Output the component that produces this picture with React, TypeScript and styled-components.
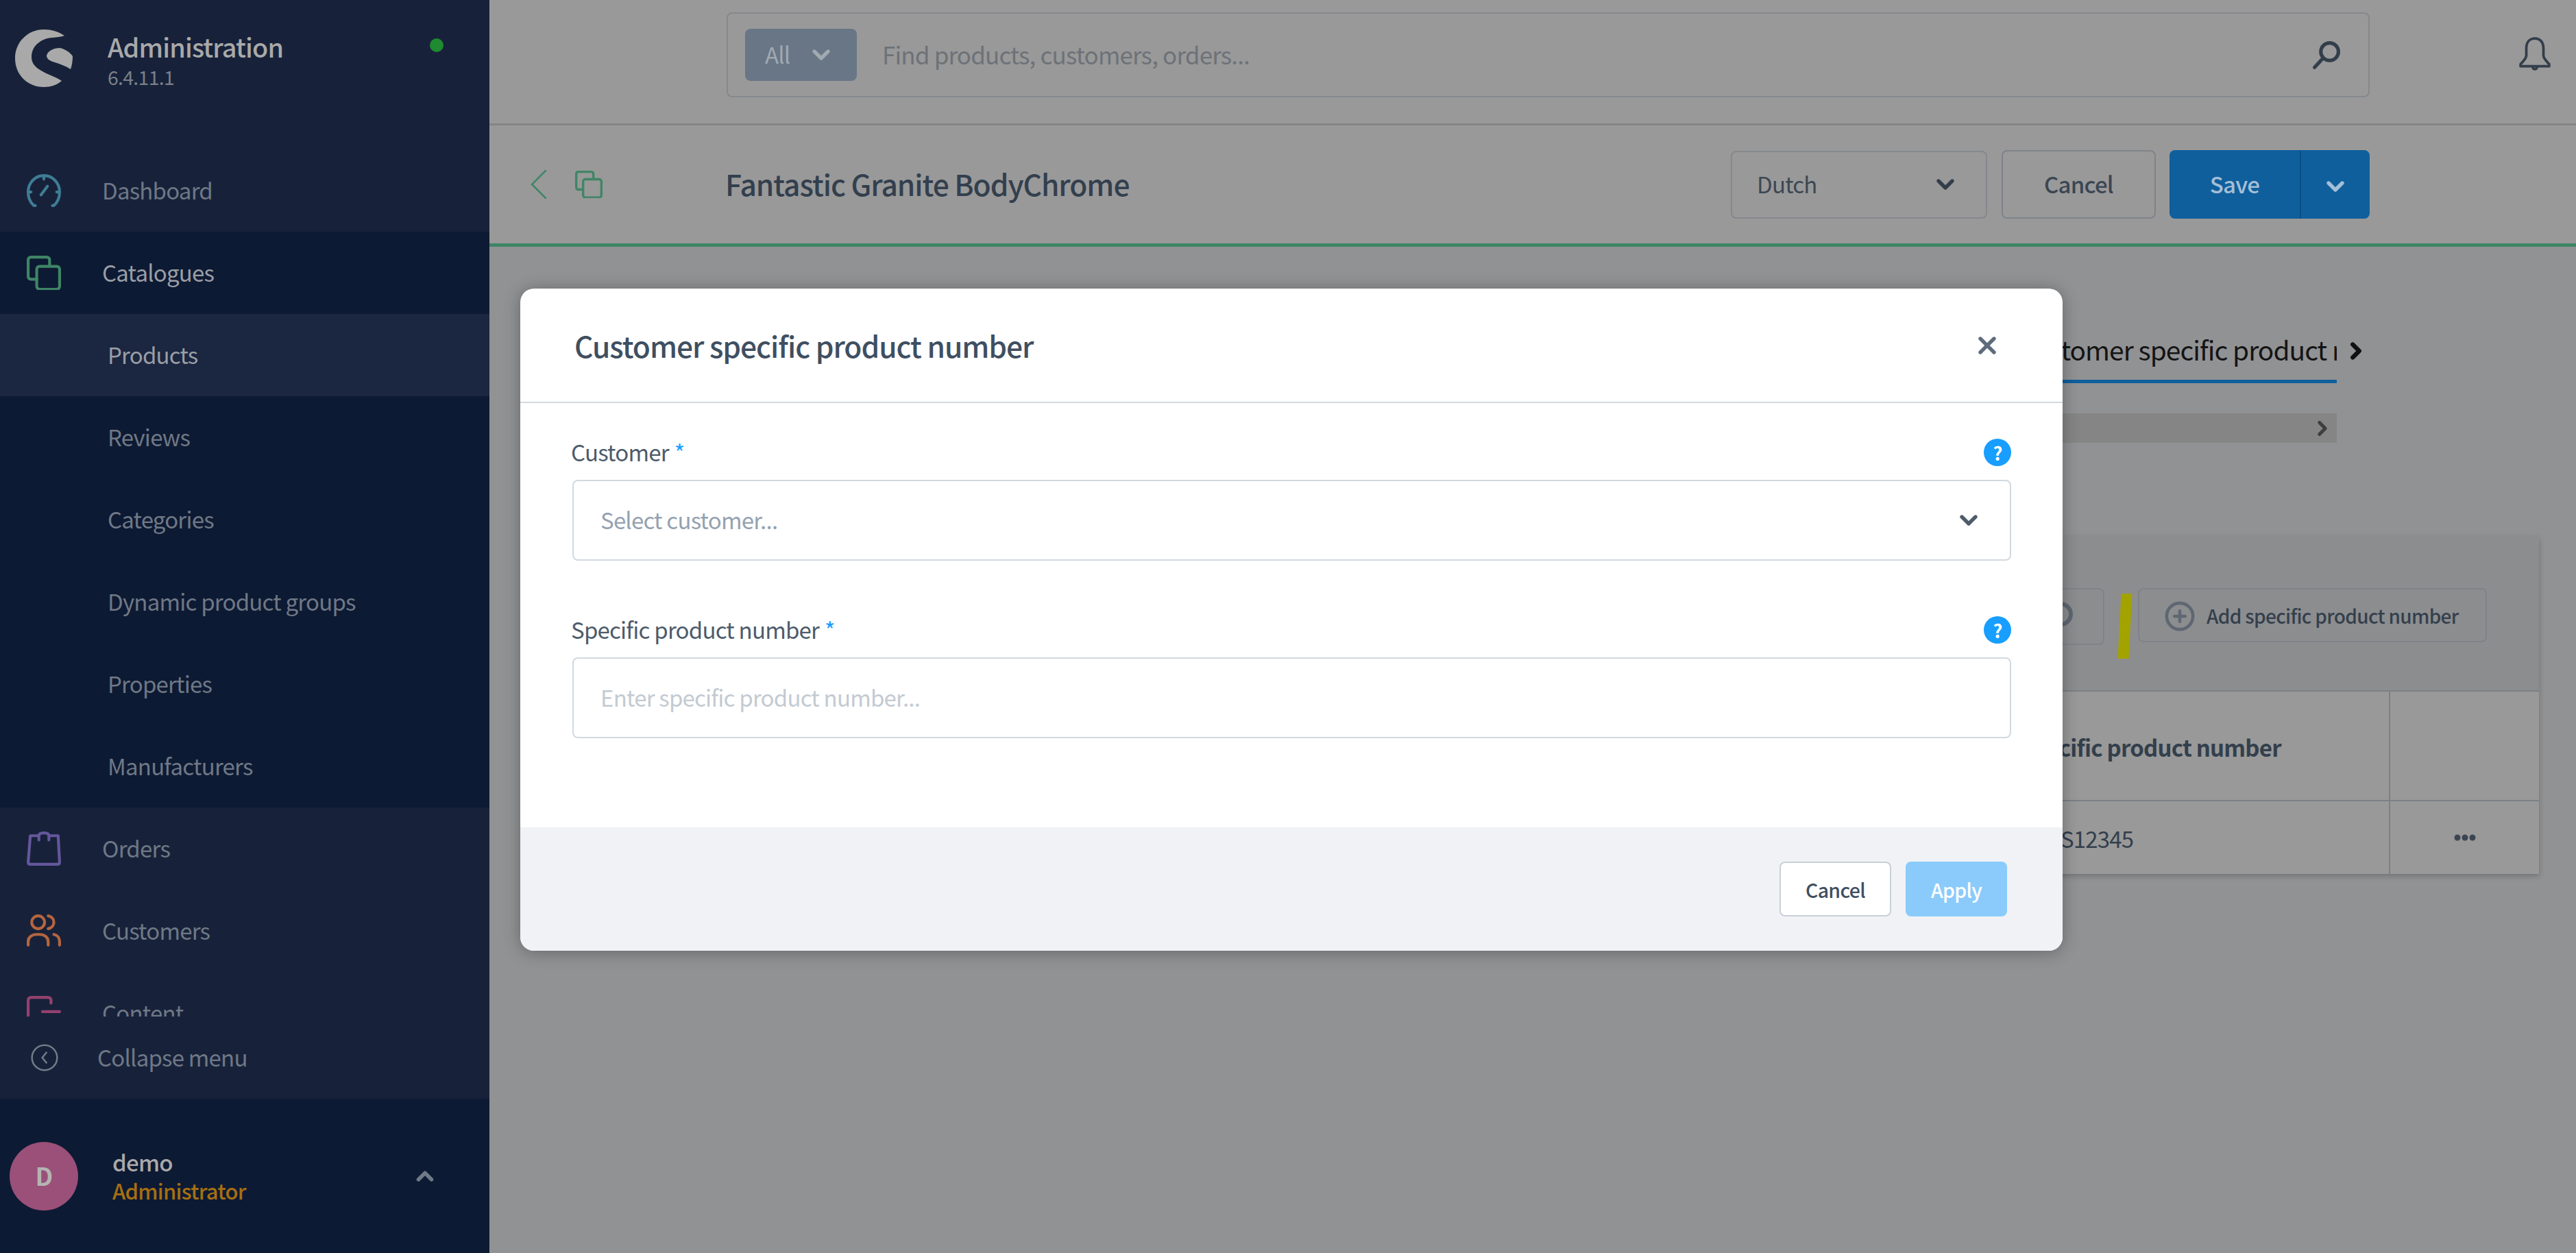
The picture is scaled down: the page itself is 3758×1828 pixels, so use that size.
import React from 'react';
import styled, { createGlobalStyle } from 'styled-components';
import { ChevronDown, ChevronRight, ChevronUp, CirclePlus, X } from 'lucide-react';

const GlobalStyle = createGlobalStyle`
  html, body {
    margin: 0;
    padding: 0;
    background: #919294;
  }
  * {
    box-sizing: border-box;
    letter-spacing: -0.024em;
  }
  body {
    font-family: "Noto Sans CJK SC", "Noto Sans", sans-serif;
  }
`;

const Page = styled.div`
  position: relative;
  display: flex;
  width: 3758px;
  height: 1828px;
  overflow: hidden;
`;

// the CJK font sits a touch low in its line box, this pulls the label back up
const Label = styled.span`
  display: block;
  margin-bottom: 3px;
  white-space: nowrap;
`;

/* sidebar */
const Sidebar = styled.aside`
  width: 714px;
  flex-shrink: 0;
  display: flex;
  flex-direction: column;
  background: #17223a;
`;

const BrandRow = styled.div`
  position: relative;
  height: 218px;
  flex-shrink: 0;
  display: flex;
  padding: 43px 0 0 22px;
`;

const BrandText = styled.div`
  margin-left: 51px;
  display: flex;
  flex-direction: column;
`;

const BrandName = styled.div`
  font-size: 37.800px;
  line-height: 50px;
  font-weight: 500;
  color: #a9a9a9;
`;

const BrandVersion = styled.div`
  margin-top: 1px;
  font-size: 28.400px;
  line-height: 36px;
  color: #7a7f88;
`;

const StatusDot = styled.span`
  position: absolute;
  left: 627px;
  top: 56px;
  width: 20px;
  height: 20px;
  border-radius: 50%;
  background: #1f8a2f;
`;

const NavScroll = styled.nav`
  flex: 1;
  min-height: 0;
  overflow: hidden;
`;

const NavItem = styled.div<{ $active?: boolean }>`
  height: 120px;
  display: flex;
  align-items: center;
  padding-left: 39px;
  gap: 60px;
  font-size: 33px;
  color: ${(p) => (p.$active ? '#9a9ea6' : '#6f7886')};
  background: ${(p) => (p.$active ? '#0d1a33' : 'transparent')};
`;

const NavIcon = styled.svg<{ $color: string }>`
  width: 50px;
  height: 50px;
  flex-shrink: 0;
  fill: none;
  stroke: ${(p) => p.$color};
  stroke-width: 2;
  stroke-linecap: round;
  stroke-linejoin: round;
`;

const SubMenu = styled.div`
  background: #0d1a33;
`;

const SubItem = styled.div<{ $active?: boolean }>`
  height: 120px;
  display: flex;
  align-items: center;
  padding-left: 157px;
  font-size: 33px;
  color: ${(p) => (p.$active ? '#9a9ea6' : '#6f7886')};
  background: ${(p) => (p.$active ? '#1b2640' : 'transparent')};
`;

const CollapseRow = styled.div`
  height: 120px;
  flex-shrink: 0;
  display: flex;
  align-items: center;
  padding-left: 45px;
  gap: 57px;
  font-size: 33px;
  color: #6f7886;
`;

const UserRow = styled.div`
  height: 225px;
  flex-shrink: 0;
  display: flex;
  align-items: center;
  padding: 0 0 0 14px;
  background: #0d1a33;
`;

const Avatar = styled.div`
  width: 100px;
  height: 100px;
  border-radius: 50%;
  background: #9a5078;
  color: #b4b4b4;
  display: flex;
  align-items: center;
  justify-content: center;
  font-size: 36px;
  font-weight: 700;
`;

const UserText = styled.div`
  margin-left: 50px;
  width: 437px;
`;

const UserName = styled.div`
  font-size: 33px;
  line-height: 42px;
  font-weight: 500;
  color: #a9a9a9;
`;

const UserRole = styled.div`
  font-size: 31px;
  line-height: 42px;
  font-weight: 500;
  color: #a66f12;
`;

/* main column */
const Main = styled.main`
  flex: 1;
  min-width: 0;
  display: flex;
  flex-direction: column;
`;

const TopBar = styled.header`
  height: 183px;
  flex-shrink: 0;
  display: flex;
  padding: 18px 0 0 346px;
  background: #999999;
  border-bottom: 3px solid #858585;
`;

const SearchBox = styled.div`
  width: 2397px;
  height: 124px;
  display: flex;
  align-items: center;
  padding: 0 39px 0 25px;
  border: 2px solid #85888c;
  border-radius: 8px;
`;

const TypePill = styled.div`
  width: 163px;
  height: 76px;
  display: flex;
  align-items: center;
  gap: 26px;
  padding-left: 29px;
  border-radius: 8px;
  background: #687686;
  color: #a1a9b1;
  font-size: 33px;
`;

const SearchHint = styled.div`
  margin-left: 37px;
  flex: 1;
  font-size: 35px;
  color: #6d7278;
`;

const BellWrap = styled.div`
  margin: 36px 0 0 216px;
`;

const SmartBar = styled.div`
  height: 177px;
  flex-shrink: 0;
  display: flex;
  align-items: center;
  padding: 0 301px 0 60px;
  background: #999999;
  border-bottom: 5px solid #3f8566;
`;

const BackGroup = styled.div`
  width: 284px;
  display: flex;
  align-items: center;
  gap: 41px;
`;

const PageTitle = styled.h1`
  flex: 1;
  margin: 0 0 3px;
  font-size: 42.500px;
  font-weight: 500;
  color: #333f4e;
`;

const Actions = styled.div`
  display: flex;
  align-items: center;
`;

const LangSelect = styled.div`
  width: 374px;
  height: 99px;
  display: flex;
  align-items: center;
  justify-content: space-between;
  padding: 0 39px 0 36px;
  border: 2px solid #85888c;
  border-radius: 8px;
  font-size: 33px;
  color: #3d4753;
`;

const GhostButton = styled.div`
  width: 225px;
  height: 100px;
  margin-left: 21px;
  display: flex;
  align-items: center;
  justify-content: center;
  border: 2px solid #7f8388;
  border-radius: 8px;
  font-size: 33px;
  font-weight: 500;
  color: #3b4653;
`;

const SaveButton = styled.div`
  width: 292px;
  height: 100px;
  margin-left: 20px;
  display: flex;
  border-radius: 8px;
  background: #0f5f9d;
  color: #a4bfd6;
  font-size: 33px;
  font-weight: 500;
`;

const SaveLabel = styled.div`
  width: 192px;
  display: flex;
  align-items: center;
  justify-content: center;
  border-right: 2px solid #0c4f84;
`;

const SaveCaret = styled.div`
  flex: 1;
  display: flex;
  align-items: center;
  justify-content: center;
  padding-top: 6px;
`;

/* page content behind the modal */
const Content = styled.div`
  flex: 1;
  min-height: 0;
  padding-top: 105px;
  background: #919294;
`;

const TabsRow = styled.div`
  display: flex;
  align-items: center;
  padding: 0 301px 0 346px;
`;

const TabsClip = styled.div`
  flex: 1;
  min-width: 0;
  overflow: hidden;
`;

const Tab = styled.div`
  display: inline-block;
  margin-left: 1884px;
  height: 94px;
  line-height: 88px;
  white-space: nowrap;
  font-size: 38.800px;
  color: #141414;
  border-bottom: 5px solid #0f5f9d;
`;

const TabsArrow = styled.div`
  width: 48px;
  display: flex;
  justify-content: center;
  padding-left: 8px;
  color: #111111;
`;

const ScrollTrack = styled.div`
  height: 43px;
  margin: 44px 349px 0 346px;
  display: flex;
  align-items: center;
  justify-content: flex-end;
  padding-right: 4px;
  background: #858585;
  color: #3e3e3e;
`;

const Card = styled.section`
  margin: 137px 54px 0 60px;
  background: #999999;
  box-shadow: 0 3px 8px rgba(0, 0, 0, 0.22);
`;

const CardToolbar = styled.div`
  height: 226px;
  display: flex;
  justify-content: flex-end;
  align-items: flex-start;
  padding: 75px 76px 0 0;
  background: #8c8d8f;
  border-bottom: 2px solid #7c8086;
`;

const RefreshButton = styled.div`
  width: 240px;
  height: 83px;
  display: flex;
  align-items: center;
  justify-content: flex-end;
  padding-right: 44px;
  border: 2px solid #7f8388;
  border-radius: 8px;
`;

const RefreshRing = styled.span`
  width: 36px;
  height: 36px;
  margin-bottom: 8px;
  border: 6px solid #5e6772;
  border-radius: 50%;
`;

const Highlighter = styled.span`
  width: 16px;
  height: 95px;
  margin: 8px 11px 0 22px;
  background: #a3a300;
  transform: skewX(-3deg);
`;

const AddButton = styled.div`
  width: 509px;
  height: 79px;
  display: flex;
  align-items: center;
  gap: 16px;
  padding: 3px 0 0 36px;
  border: 2px solid #7f8388;
  border-radius: 8px;
  font-size: 28px;
  font-weight: 500;
  color: #343f4c;
`;

const TableRow = styled.div<{ $height: number; $last?: boolean }>`
  height: ${(p) => p.$height}px;
  display: grid;
  grid-template-columns: 2711px 1fr;
  border-bottom: ${(p) => (p.$last ? 'none' : '2px solid #7c8086')};
`;

const NumberCell = styled.div<{ $head?: boolean }>`
  display: flex;
  align-items: center;
  padding: ${(p) => (p.$head ? '7px' : '4px')} 0 0 2171px;
  font-size: 33px;
  font-weight: ${(p) => (p.$head ? 700 : 400)};
  color: #333f4c;
`;

const ActionCell = styled.div`
  display: flex;
  align-items: center;
  justify-content: center;
  border-left: 2px solid #7c8086;
`;

/* modal */
const Modal = styled.div`
  position: absolute;
  left: 759px;
  top: 421px;
  width: 2250px;
  height: 966px;
  display: flex;
  flex-direction: column;
  background: #ffffff;
  border-radius: 20px;
  overflow: hidden;
  box-shadow: 0 2px 24px rgba(0, 0, 0, 0.3);
`;

const ModalHead = styled.div`
  height: 167px;
  flex-shrink: 0;
  display: flex;
  align-items: center;
  justify-content: space-between;
  padding: 0 90px 0 79px;
  border-bottom: 2px solid #d4d9df;
`;

const ModalTitle = styled.h2`
  margin: 0 0 1px;
  font-size: 42.500px;
  font-weight: 500;
  color: #3f4f61;
`;

const ModalBody = styled.div`
  flex: 1;
  padding: 52px 75px 0 76px;
`;

const Field = styled.div`
  margin-bottom: 81px;
`;

const FieldLabelRow = styled.div`
  height: 40px;
  margin-bottom: 20px;
  display: flex;
  align-items: center;
  justify-content: space-between;
`;

const FieldLabel = styled.label`
  display: block;
  margin: 0 0 3px -2px;
  font-size: 33px;
  color: #4d5b6a;
`;

const Required = styled.span`
  margin-left: 8px;
  color: #189eff;
`;

const HelpBadge = styled.span`
  width: 40px;
  height: 40px;
  border-radius: 50%;
  background: #189eff;
  color: #ffffff;
  display: flex;
  align-items: center;
  justify-content: center;
  font-size: 27px;
  font-weight: 700;
`;

const InputBox = styled.div<{ $faint?: boolean }>`
  height: 118px;
  display: flex;
  align-items: center;
  justify-content: space-between;
  padding: 0 40px 0 39px;
  border: 2px solid #d1d9e0;
  border-radius: 8px;
  font-size: 33px;
  color: ${(p) => (p.$faint ? '#c3cad2' : '#94a2b0')};
`;

const ModalFoot = styled.div`
  height: 180px;
  flex-shrink: 0;
  display: flex;
  justify-content: flex-end;
  align-items: flex-start;
  gap: 21px;
  padding: 50px 81px 0 0;
  background: #f0f2f5;
`;

const FootButton = styled.div<{ $primary?: boolean }>`
  width: ${(p) => (p.$primary ? '148px' : '163px')};
  height: 80px;
  display: flex;
  align-items: center;
  justify-content: center;
  padding-top: 4px;
  border-radius: 8px;
  font-size: 28.500px;
  font-weight: 500;
  color: ${(p) => (p.$primary ? '#ffffff' : '#3f4f61')};
  background: ${(p) => (p.$primary ? '#8bcbfc' : '#ffffff')};
  border: ${(p) => (p.$primary ? 'none' : '2px solid #c9d0d8')};
`;

const Logo = () => (
  <svg width="84" height="84" viewBox="0 0 84 84" fill="#a9a9a9">
    <path d="M72 9C63 3 53 0 42 0C18 0 0 19 0 42C0 66 18 84 42 84C52 84 61 81 68 75C60 69 47 66 38 60C29 55 24 49 24 40C24 24 38 13 54 12C60 11 67 11 72 9Z" />
    <path d="M46 38C48 31 56 27 65 27C72 28 80 33 84 39C84 46 83 52 81 58C73 53 65 50 58 48C52 46 46 44 46 38Z" />
  </svg>
);

const GaugeIcon = () => (
  <NavIcon $color="#3f7d94" viewBox="0 0 24 24">
    <path d="M6 22.500H5C2.600 20.500 1 17 1 13C1 6.400 6 1.500 12 1.500C18 1.500 23 6.400 23 13C23 17 21.400 20.500 19 22.500H18" />
    <path d="M12 2V4M1.500 13H3M22.500 13H21M10 15L14.500 9" />
  </NavIcon>
);

const CopyIcon = ({ color, size }: { color: string; size?: number }) => (
  <NavIcon $color={color} viewBox="0 0 24 24" style={size ? { width: size, height: size } : undefined}>
    <path d="M7 16.500H3C1.800 16.500 1 15.700 1 14.500V3C1 1.800 1.800 1 3 1H14C15.200 1 16 1.800 16 3V7" />
    <rect x="7" y="7.500" width="16" height="16" rx="2" />
  </NavIcon>
);

const BagIcon = () => (
  <NavIcon $color="#64579c" viewBox="0 0 24 24">
    <path d="M7.500 3H2.500L1 21.500C1 22.500 1.500 23 2.500 23H21.500C22.500 23 23 22.500 23 21.500L22 3H16.500" />
    <path d="M8.500 6V3C8.500 1.500 10 1 12 1C14 1 15.500 1.500 15.500 3V6" />
  </NavIcon>
);

const UsersIcon = () => (
  <NavIcon $color="#b5653f" viewBox="0 0 24 24">
    <circle cx="8" cy="6" r="4.500" />
    <path d="M15 1.500C17.500 2 19 3.800 19 6C19 8.200 17.500 10 15 10.500" />
    <path d="M1 22V19.500C1 16.500 3.500 14.500 7 14.500H9C12.500 14.500 15 16.500 15 19.500V22" />
    <path d="M19 14.500C21.500 15 23 17 23 19.500V22" />
  </NavIcon>
);

const ContentIcon = () => (
  <NavIcon $color="#94416f" viewBox="0 0 24 24">
    <path d="M1 23V3C1 1.800 1.800 1 3 1H15C16.200 1 17 1.800 17 3V5" />
    <path d="M11 11H23" />
  </NavIcon>
);

const CollapseIcon = () => (
  <svg width="40" height="40" viewBox="0 0 24 24" fill="none" stroke="#727b88" strokeWidth="1.500">
    <circle cx="12" cy="12" r="11" />
    <path d="M14 7L10 12L14 17" />
  </svg>
);

const SearchGlyph = () => (
  <svg width="44" height="44" viewBox="0 0 24 24" fill="none" stroke="#333e4b" strokeWidth="2.800" strokeLinecap="round">
    <circle cx="14.500" cy="9.500" r="7" />
    <path d="M9 15L2.500 22" />
  </svg>
);

const BellGlyph = () => (
  <svg width="50" height="50" viewBox="0 0 24 24" fill="none" stroke="#333e4b" strokeWidth="1.800" strokeLinecap="round" strokeLinejoin="round">
    <path d="M12 1C8 1 6 4 6 8V13C6 15 4 17 2 19V20.500H22V19C20 17 18 15 18 13V8C18 4 16 1 12 1Z" />
    <path d="M10.500 21C10.500 23 13.500 23 13.500 21" />
  </svg>
);

const BackChevron = () => (
  <svg width="24" height="42" viewBox="0 0 24 42" fill="none" stroke="#3f8566" strokeWidth="2.500" strokeLinecap="round">
    <path d="M22 1L2 21L22 41" />
  </svg>
);

const DotsGlyph = () => (
  <svg width="32" height="10" viewBox="0 0 32 10" fill="#3a4551">
    <circle cx="5" cy="5" r="4.500" />
    <circle cx="16" cy="5" r="4.500" />
    <circle cx="27" cy="5" r="4.500" />
  </svg>
);

const App = () => {
  return (
    <Page>
      <GlobalStyle />
      <Sidebar>
        <BrandRow>
          <Logo />
          <BrandText>
            <BrandName>Administration</BrandName>
            <BrandVersion>6.4.11.1</BrandVersion>
          </BrandText>
          <StatusDot />
        </BrandRow>
        <NavScroll>
          <NavItem>
            <GaugeIcon />
            <Label>Dashboard</Label>
          </NavItem>
          <NavItem $active>
            <CopyIcon color="#3f8566" />
            <Label>Catalogues</Label>
          </NavItem>
          <SubMenu>
            <SubItem $active><Label>Products</Label></SubItem>
            <SubItem><Label>Reviews</Label></SubItem>
            <SubItem><Label>Categories</Label></SubItem>
            <SubItem><Label>Dynamic product groups</Label></SubItem>
            <SubItem><Label>Properties</Label></SubItem>
            <SubItem><Label>Manufacturers</Label></SubItem>
          </SubMenu>
          <NavItem>
            <BagIcon />
            <Label>Orders</Label>
          </NavItem>
          <NavItem>
            <UsersIcon />
            <Label>Customers</Label>
          </NavItem>
          <NavItem>
            <ContentIcon />
            <Label>Content</Label>
          </NavItem>
        </NavScroll>
        <CollapseRow>
          <CollapseIcon />
          <Label>Collapse menu</Label>
        </CollapseRow>
        <UserRow>
          <Avatar><Label>D</Label></Avatar>
          <UserText>
            <UserName>demo</UserName>
            <UserRole>Administrator</UserRole>
          </UserText>
          <ChevronUp size={38} color="#707a87" strokeWidth={3.500} />
        </UserRow>
      </Sidebar>

      <Main>
        <TopBar>
          <SearchBox>
            <TypePill>
              <Label>All</Label>
              <ChevronDown size={40} strokeWidth={3.200} />
            </TypePill>
            <SearchHint><Label>Find products, customers, orders...</Label></SearchHint>
            <SearchGlyph />
          </SearchBox>
          <BellWrap>
            <BellGlyph />
          </BellWrap>
        </TopBar>

        <SmartBar>
          <BackGroup>
            <BackChevron />
            <CopyIcon color="#3f8566" size={40} />
          </BackGroup>
          <PageTitle>Fantastic Granite BodyChrome</PageTitle>
          <Actions>
            <LangSelect>
              <Label>Dutch</Label>
              <ChevronDown size={40} color="#333e4b" strokeWidth={3.200} />
            </LangSelect>
            <GhostButton><Label>Cancel</Label></GhostButton>
            <SaveButton>
              <SaveLabel><Label>Save</Label></SaveLabel>
              <SaveCaret>
                <ChevronDown size={40} strokeWidth={3.200} />
              </SaveCaret>
            </SaveButton>
          </Actions>
        </SmartBar>

        <Content>
          <TabsRow>
            <TabsClip>
              <Tab>Customer specific product number</Tab>
            </TabsClip>
            <TabsArrow>
              <ChevronRight size={38} strokeWidth={4} />
            </TabsArrow>
          </TabsRow>
          <ScrollTrack>
            <ChevronRight size={34} strokeWidth={3.500} />
          </ScrollTrack>
          <Card>
            <CardToolbar>
              <RefreshButton>
                <RefreshRing />
              </RefreshButton>
              <Highlighter />
              <AddButton>
                <CirclePlus size={46} color="#5e6772" strokeWidth={2.400} />
                <Label>Add specific product number</Label>
              </AddButton>
            </CardToolbar>
            <TableRow $height={160}>
              <NumberCell $head><Label>Specific product number</Label></NumberCell>
              <ActionCell />
            </TableRow>
            <TableRow $height={106} $last>
              <NumberCell><Label>MMIS12345</Label></NumberCell>
              <ActionCell>
                <DotsGlyph />
              </ActionCell>
            </TableRow>
          </Card>
        </Content>
      </Main>

      <Modal>
        <ModalHead>
          <ModalTitle>Customer specific product number</ModalTitle>
          <X size={40} color="#5e6c7c" strokeWidth={3.200} />
        </ModalHead>
        <ModalBody>
          <Field>
            <FieldLabelRow>
              <FieldLabel>
                Customer<Required>*</Required>
              </FieldLabel>
              <HelpBadge>?</HelpBadge>
            </FieldLabelRow>
            <InputBox>
              <Label>Select customer...</Label>
              <ChevronDown size={40} color="#4d5b6a" strokeWidth={3.200} />
            </InputBox>
          </Field>
          <Field>
            <FieldLabelRow>
              <FieldLabel>
                Specific product number<Required>*</Required>
              </FieldLabel>
              <HelpBadge>?</HelpBadge>
            </FieldLabelRow>
            <InputBox $faint><Label>Enter specific product number...</Label></InputBox>
          </Field>
        </ModalBody>
        <ModalFoot>
          <FootButton><Label>Cancel</Label></FootButton>
          <FootButton $primary><Label>Apply</Label></FootButton>
        </ModalFoot>
      </Modal>
    </Page>
  );
};

export default App;
